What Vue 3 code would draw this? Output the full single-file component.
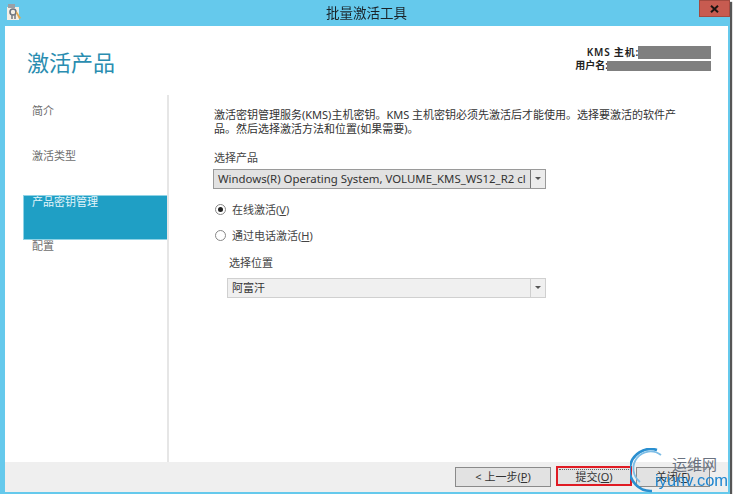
<template>
  <div class="window">
    <header class="titlebar">
      <svg class="app-icon" width="16" height="16" viewBox="0 0 16 16">
        <rect x="1" y="3" width="12" height="13" fill="#f3efe6" />
        <rect x="2" y="0" width="7" height="4" fill="#9aa0a6" />
        <circle cx="7" cy="8" r="3" fill="none" stroke="#6c7480" stroke-width="1.6" />
        <path d="M6 10 V15 M9 10 V15" stroke="#7b8088" stroke-width="1.6" />
        <path d="M10.5 7 L15 14 L13 15 L10 9 Z" fill="#e2a94e" />
      </svg>
      <div class="title">批量激活工具</div>
      <div class="close">
        <svg width="9" height="8" viewBox="0 0 9 8"><path d="M1 0.8 L8 7.2 M8 0.8 L1 7.2" stroke="#1d1512" stroke-width="2" /></svg>
      </div>
    </header>
    <div class="client">
      <div class="top">
        <h1 class="heading">激活产品</h1>
        <div class="kms">
          <div class="kms-row"><span class="kms-host">KMS 主机:</span><i class="mask m1"></i></div>
          <div class="kms-row"><span>用户名:</span><i class="mask m2"></i></div>
        </div>
      </div>
      <div class="middle">
        <nav class="nav">
          <div v-for="s in steps" :key="s" class="step" :class="{ active: s === '产品密钥管理' }">{{ s }}</div>
        </nav>
        <main class="panel">
          <p class="desc">激活密钥管理服务(KMS)主机密钥。KMS 主机密钥必须先激活后才能使用。选择要激活的软件产品。然后选择激活方法和位置(如果需要)。</p>
          <div class="label">选择产品</div>
          <div class="combo dark">
            <span class="combo-text">Windows(R) Operating System, VOLUME_KMS_WS12_R2 cl</span>
            <span class="arrow dark-arrow"></span>
          </div>
          <label class="radio first"><span class="dot on"></span>在线激活(<u>V</u>)</label>
          <label class="radio"><span class="dot"></span>通过电话激活(<u>H</u>)</label>
          <div class="indent">
            <div class="label">选择位置</div>
            <div class="combo light">
              <span class="combo-text">阿富汗</span>
              <span class="arrow"></span>
            </div>
          </div>
        </main>
      </div>
      <footer class="footer">
        <button class="btn prev">&lt; 上一步(<u>P</u>)</button>
        <button class="btn primary"><span>提交(<u>O</u>)</span></button>
        <button class="btn last">关闭(<u>F</u>)</button>
      </footer>
    </div>
    <div class="watermark">
      <svg class="wm-logo" width="48" height="48" viewBox="0 0 48 48">
        <path d="M27 2 A21 21 0 1 0 22 43" fill="none" stroke="#2a8fd0" stroke-width="2.6" />
        <path d="M31 7 A17 17 0 0 0 10 34" fill="none" stroke="#7dbde6" stroke-width="1.8" />
      </svg>
      <span class="wm-cn">运维网</span>
      <span class="wm-en">iyunv.com</span>
    </div>
  </div>
</template>

<script setup>
const steps = ['简介', '激活类型', '产品密钥管理', '配置']
</script>

<style>
html, body { margin: 0; background: #fff; }
</style>

<style scoped>
.window {
  position: relative;
  width: 730px;
  height: 494px;
  background: #65c9ec;
  box-shadow: 2px 2px 1px #555;
  font-family: "Noto Sans", "Noto Sans CJK SC", sans-serif;
  display: flex;
  flex-direction: column;
  filter: blur(0.4px);
}
.titlebar {
  height: 26px;
  flex: none;
  display: flex;
  align-items: flex-start;
  justify-content: space-between;
}
.app-icon { margin: 4px 0 0 6px; }
.title {
  font-size: 13.5px;
  color: #1a2328;
  margin: 5px 0 0 12px;
  line-height: 16px;
}
.close {
  width: 31px;
  height: 17px;
  background: #c75b50;
  border: 1px solid #a34a40;
  box-sizing: border-box;
  display: flex;
  align-items: center;
  justify-content: center;
}
.client {
  flex: 1;
  margin: 0 2px 2px 5px;
  background: #fff;
  display: flex;
  flex-direction: column;
  min-height: 0;
}
.top {
  height: 69px;
  flex: none;
  display: flex;
  justify-content: space-between;
}
.heading {
  margin: 22px 0 0 22px;
  font-size: 22px;
  line-height: 28px;
  font-weight: 400;
  color: #2a8db0;
}
.kms {
  margin: 20px 17px 0 0;
  font-size: 10px;
  color: #222;
  font-weight: 600;
  display: flex;
  flex-direction: column;
  align-items: flex-end;
}
.kms-row { display: flex; align-items: center; height: 13px; line-height: 13px; }
.kms-host { letter-spacing: 0.8px; }
.mask { display: block; background: #7f7f7f; }
.m1 { width: 73px; height: 13px; margin-left: -1px; }
.m2 { width: 104px; height: 10px; margin-left: -1px; }
.middle { flex: 1; display: flex; min-height: 0; }
.nav {
  width: 162px;
  flex: none;
  border-right: 2px solid #e6e6e6;
  padding-top: 10px;
}
.step {
  height: 45px;
  padding-left: 9px;
  margin-left: 18px;
  font-size: 11px;
  line-height: 12px;
  color: #6e6e6e;
  box-sizing: border-box;
}
.step.active {
  background: #1f9fc5;
  color: #e4f5fa;
  border: 1px solid #8fd3e6;
  border-right: 0;
  padding-left: 8px;
}
.panel {
  flex: 1;
  padding: 13px 26px 0 45px;
  color: #333;
  font-size: 11px;
}
.desc {
  margin: 0;
  line-height: 14px;
  width: 470px;
  color: #333;
}
.label { line-height: 14px; color: #444; }
.desc + .label { margin-top: 15px; }
.combo {
  display: flex;
  align-items: center;
  justify-content: space-between;
  box-sizing: border-box;
  height: 20px;
  margin: 4px 0 0 -1px;
  border: 1px solid #a0a0a0;
  color: #333;
}
.combo.dark { width: 333px; background: #e2e2e2; border-color: #9a9a9a; }
.combo.light { width: 319px; background: #f0f0f0; border-color: #d0d0d0; margin-top: 8px; }
.combo-text { padding-left: 4px; font-size: 11px; line-height: 14px; white-space: nowrap; overflow: hidden; }
.combo.dark .combo-text { font-size: 11.4px; }
.arrow {
  align-self: stretch;
  width: 14px;
  flex: none;
  position: relative;
  border-left: 1px solid #d0d0d0;
  background: #f0f0f0;
}
.dark-arrow { border-left: 1px solid #777; background: #ececec; }
.arrow::after {
  content: "";
  position: absolute;
  left: 4px;
  top: 7px;
  border: 3px solid transparent;
  border-top: 3px solid #555;
  border-bottom: 0;
}
.radio {
  display: flex;
  align-items: center;
  height: 14px;
  margin-top: 12px;
  color: #444;
}
.radio.first { margin-top: 13px; }
.dot {
  width: 11px;
  height: 11px;
  margin: 0 6px 0 1px;
  border: 1px solid #888;
  border-radius: 50%;
  box-sizing: border-box;
  background: #fff;
  position: relative;
}
.dot.on::after {
  content: "";
  position: absolute;
  left: 2px;
  top: 2px;
  width: 5px;
  height: 5px;
  background: #222;
  border-radius: 50%;
}
.indent { margin: 14px 0 0 14px; }
.indent .label { padding-left: 1px; }
.footer {
  height: 30px;
  flex: none;
  background: #efefef;
  display: flex;
  align-items: flex-start;
  justify-content: flex-end;
  gap: 4px;
  padding: 5px 18px 0 0;
  box-sizing: border-box;
}
.btn {
  height: 20px;
  padding: 0;
  font: inherit;
  font-size: 11px;
  line-height: 14px;
  color: #333;
  background: #e2e2e2;
  border: 1px solid #8a8a8a;
  box-sizing: border-box;
}
.prev { width: 96px; margin-right: 1px; }
.btn.primary {
  width: 76px;
  margin-top: -1px;
  border: 2px solid #e01b24;
}
.btn.primary span {
  display: block;
  margin: 0 1px;
  border-top: 1px dotted #666;
  line-height: 14px;
}
.last { width: 74px; }
.watermark { position: absolute; left: 630px; top: 448px; width: 102px; height: 48px; pointer-events: none; }
.wm-logo { position: absolute; left: 0; top: 0; }
.wm-cn { position: absolute; left: 42px; top: 8px; font-size: 15px; line-height: 16px; color: #6a7280; }
.wm-en { position: absolute; left: 25px; top: 23px; font-family: "Liberation Sans", sans-serif; font-size: 16.5px; line-height: 18px; color: #1f86d0; white-space: nowrap; }
</style>
